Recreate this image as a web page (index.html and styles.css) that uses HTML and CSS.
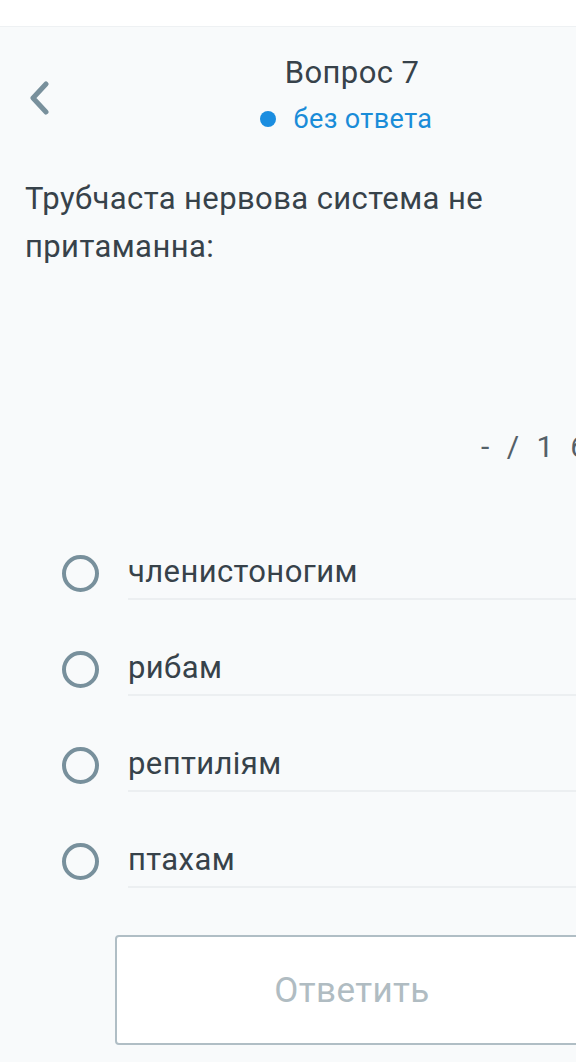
FILE: index.html
```html
<!DOCTYPE html>
<html lang="uk">
<head>
    <meta charset="UTF-8">
    <title>Вопрос 7</title>
    <meta name="viewport" content="width=device-width, initial-scale=1.0">
    <link rel="stylesheet" href="styles.css">
</head>
<body>

<div id="topBar"></div>

<div id="page">
    <div id="header">
        <div class="backCell">
            <svg class="backIcon" width="24" height="34" viewBox="0 0 24 34">
                <path d="M18 3 L5 17 L18 31" fill="none" stroke="#78909c" stroke-width="5" stroke-linecap="round" stroke-linejoin="round"/>
            </svg>
        </div>
        <div class="titleCell">
            <h1 id="title">Вопрос 7</h1>
            <p id="status"><span class="dot"></span>без ответа</p>
        </div>
        <div></div>
    </div>

    <p id="question">Трубчаста нервова система не притаманна:</p>

    <p id="score">- / 1 бал</p>

    <div id="options">
        <label class="option"><span class="radio"></span><span class="optionText">членистоногим</span></label>
        <label class="option"><span class="radio"></span><span class="optionText">рибам</span></label>
        <label class="option"><span class="radio"></span><span class="optionText">рептиліям</span></label>
        <label class="option"><span class="radio"></span><span class="optionText">птахам</span></label>
    </div>

    <div class="buttonRow">
        <button id="answerButton" disabled>Ответить</button>
    </div>
</div>

</body>
</html>
```

FILE: styles.css
```css
html, body {
    margin: 0;
    padding: 0;
}

body {
    background: #f8fafb;
    color: #37424a;
    font-family: Roboto, "Noto Sans", sans-serif;
    overflow: hidden;
    width: 576px;
    height: 1062px;
}

#topBar {
    height: 26px;
    background: #ffffff;
    border-bottom: 1px solid #eef1f3;
}

#page {
    width: 704px;
}

#header {
    display: grid;
    grid-template-columns: 1fr auto 1fr;
    align-items: center;
    padding-top: 27px;
}

.backCell {
    padding-left: 28px;
    padding-top: 6px;
}

.backIcon {
    display: block;
}

.titleCell {
    text-align: center;
}

#title {
    margin: 0;
    font-size: 31px;
    font-weight: 400;
    line-height: 38px;
    letter-spacing: 0.4px;
    color: #37424a;
}

#status {
    margin: 11px 0 0 0;
    font-size: 27px;
    line-height: 32px;
    letter-spacing: 0.4px;
    color: #1a8cd8;
    display: flex;
    align-items: center;
    justify-content: center;
}

.dot {
    width: 16px;
    height: 16px;
    border-radius: 50%;
    background: #1a8de0;
    margin-right: 18px;
    margin-left: -12px;
}

#question {
    margin: 40px 0 0 0;
    padding: 0 180px 0 25px;
    font-size: 31px;
    line-height: 48px;
    letter-spacing: 0.4px;
}

#score {
    margin: 156px 0 0 0;
    padding-left: 481px;
    font-size: 30px;
    line-height: 40px;
    color: #546068;
    white-space: nowrap;
    letter-spacing: 5px;
}

#options {
    margin-top: 85px;
    display: flex;
    flex-direction: column;
    gap: 48px;
}

.option {
    display: flex;
    align-items: flex-start;
    padding-left: 62px;
}

.radio {
    width: 29px;
    height: 29px;
    border: 4px solid #78909c;
    border-radius: 50%;
    flex: none;
    margin-right: 29px;
    margin-top: 3px;
}

.optionText {
    flex: 1;
    font-size: 31px;
    line-height: 40px;
    letter-spacing: 0.4px;
    padding-bottom: 6px;
    border-bottom: 2px solid #eceff1;
}

.buttonRow {
    padding: 47px 115px 0 115px;
}

#answerButton {
    width: 100%;
    height: 110px;
    background: #ffffff;
    border: 2px solid #b0bec5;
    border-radius: 4px;
    color: #b0bcc2;
    font-family: Roboto, "Noto Sans", sans-serif;
    font-size: 35px;
    letter-spacing: 0.4px;
}
```
